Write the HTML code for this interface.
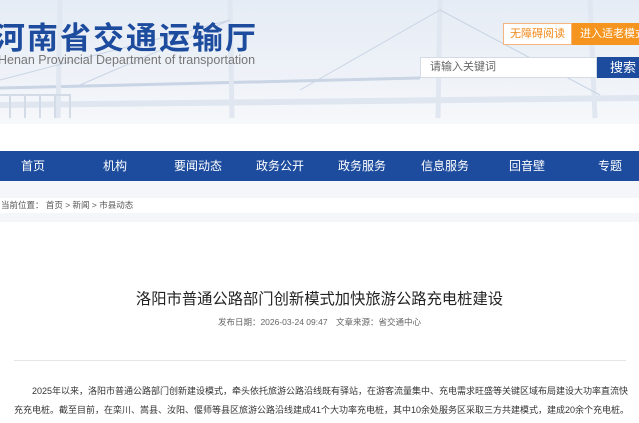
<!DOCTYPE html>
<html><head><meta charset="utf-8"><style>
*{margin:0;padding:0;box-sizing:border-box}
body{width:639px;height:423px;overflow:hidden;background:#fff;font-family:"Liberation Sans","Noto Sans CJK SC",sans-serif;position:relative}
.hdr{position:absolute;left:0;top:0;width:639px;height:124px;background:linear-gradient(180deg,#e6ecf5 0%,#eef2f8 60%,#f6f8fb 100%);overflow:hidden}
.abs{position:absolute}
.logo{left:-6px;top:13px;font-size:31px;font-weight:bold;color:#1d4c9e;letter-spacing:2px;white-space:nowrap}
.en{left:-2px;top:53px;font-size:12.5px;color:#777;white-space:nowrap}
.b1{left:503px;top:23px;width:69px;height:22px;border:1px solid #f5b57a;background:#fff;color:#f08a1c;font-size:11px;text-align:center;line-height:20px}
.b2{left:572px;top:23px;width:67px;height:22px;background:#f5951f;color:#fff;font-size:11px;line-height:22px;padding-left:8px;white-space:nowrap;overflow:hidden}
.inp{left:420px;top:57px;width:177px;height:21px;background:#fff;border:1px solid #d5dbe3;font-size:11px;color:#666;line-height:19px;padding-left:9px}
.sb{left:597px;top:57px;width:42px;height:21px;background:#1d4c9e;color:#fff;font-size:13px;line-height:21px;padding-left:13px;white-space:nowrap}
.nav{left:0;top:151px;width:639px;height:30px;background:#1d4c9e}
.nav span{position:absolute;top:0;line-height:30px;color:#fff;font-size:12px;transform:translateX(-50%);white-space:nowrap}
.bc{left:0;top:181px;width:639px;height:41px;background:#f4f6fa}
.bc div{position:absolute;left:0;top:17px;height:15px;width:639px;background:#fff;font-size:8.5px;color:#555;line-height:15px;padding-left:1px}
.t{left:0;top:287px;width:639px;text-align:center;font-size:15.3px;color:#222}
.d{left:0;top:316px;width:639px;text-align:center;font-size:8.5px;color:#666}
.hr{left:14px;top:360px;width:612px;height:1px;background:#e6e6e6}
.p{left:14px;top:382px;width:620px;font-size:9px;color:#333;line-height:19px;text-indent:18px}
</style></head><body>
<div class="hdr">
<svg width="639" height="124" style="position:absolute;left:0;top:0" stroke="#c9d4e4" fill="none">
<path d="M0 105 L639 98" stroke-width="6" stroke="#dfe6f0"/>
<path d="M0 88 L420 78" stroke-width="3"/>
<path d="M60 0 L58 118 M230 0 L232 118 M440 0 L438 118 M590 0 L595 118" stroke-width="5" stroke="#e1e7f0"/>
<path d="M230 20 L0 80 M230 20 L80 85 M440 10 L300 90 M440 10 L600 95" stroke-width="1"/>
<path d="M0 95 L70 95 L70 118 M10 95 V118 M25 95 V118 M40 95 V118 M55 95 V118" stroke-width="2" stroke="#d3dbe7"/>
</svg>
<div class="abs logo">河南省交通运输厅</div>
<div class="abs en">Henan Provincial Department of transportation</div>
<div class="abs b1">无障碍阅读</div>
<div class="abs b2">进入适老模式</div>
<div class="abs inp">请输入关键词</div>
<div class="abs sb">搜索</div>
</div>
<div class="abs nav">
<span style="left:33px">首页</span><span style="left:115px">机构</span><span style="left:198px">要闻动态</span><span style="left:280px">政务公开</span><span style="left:362px">政务服务</span><span style="left:445px">信息服务</span><span style="left:527px">回音壁</span><span style="left:610px">专题</span>
</div>
<div class="abs bc"><div>当前位置： 首页 &gt; 新闻 &gt; 市县动态</div></div>
<div class="abs t">洛阳市普通公路部门创新模式加快旅游公路充电桩建设</div>
<div class="abs d">发布日期：2026-03-24 09:47　文章来源：省交通中心</div>
<div class="abs hr"></div>
<div class="abs p">2025年以来，洛阳市普通公路部门创新建设模式，牵头依托旅游公路沿线既有驿站，在游客流量集中、充电需求旺盛等关键区域布局建设大功率直流快充充电桩。截至目前，在栾川、嵩县、汝阳、偃师等县区旅游公路沿线建成41个大功率充电桩，其中10余处服务区采取三方共建模式，建成20余个充电桩。</div>
</body></html>
